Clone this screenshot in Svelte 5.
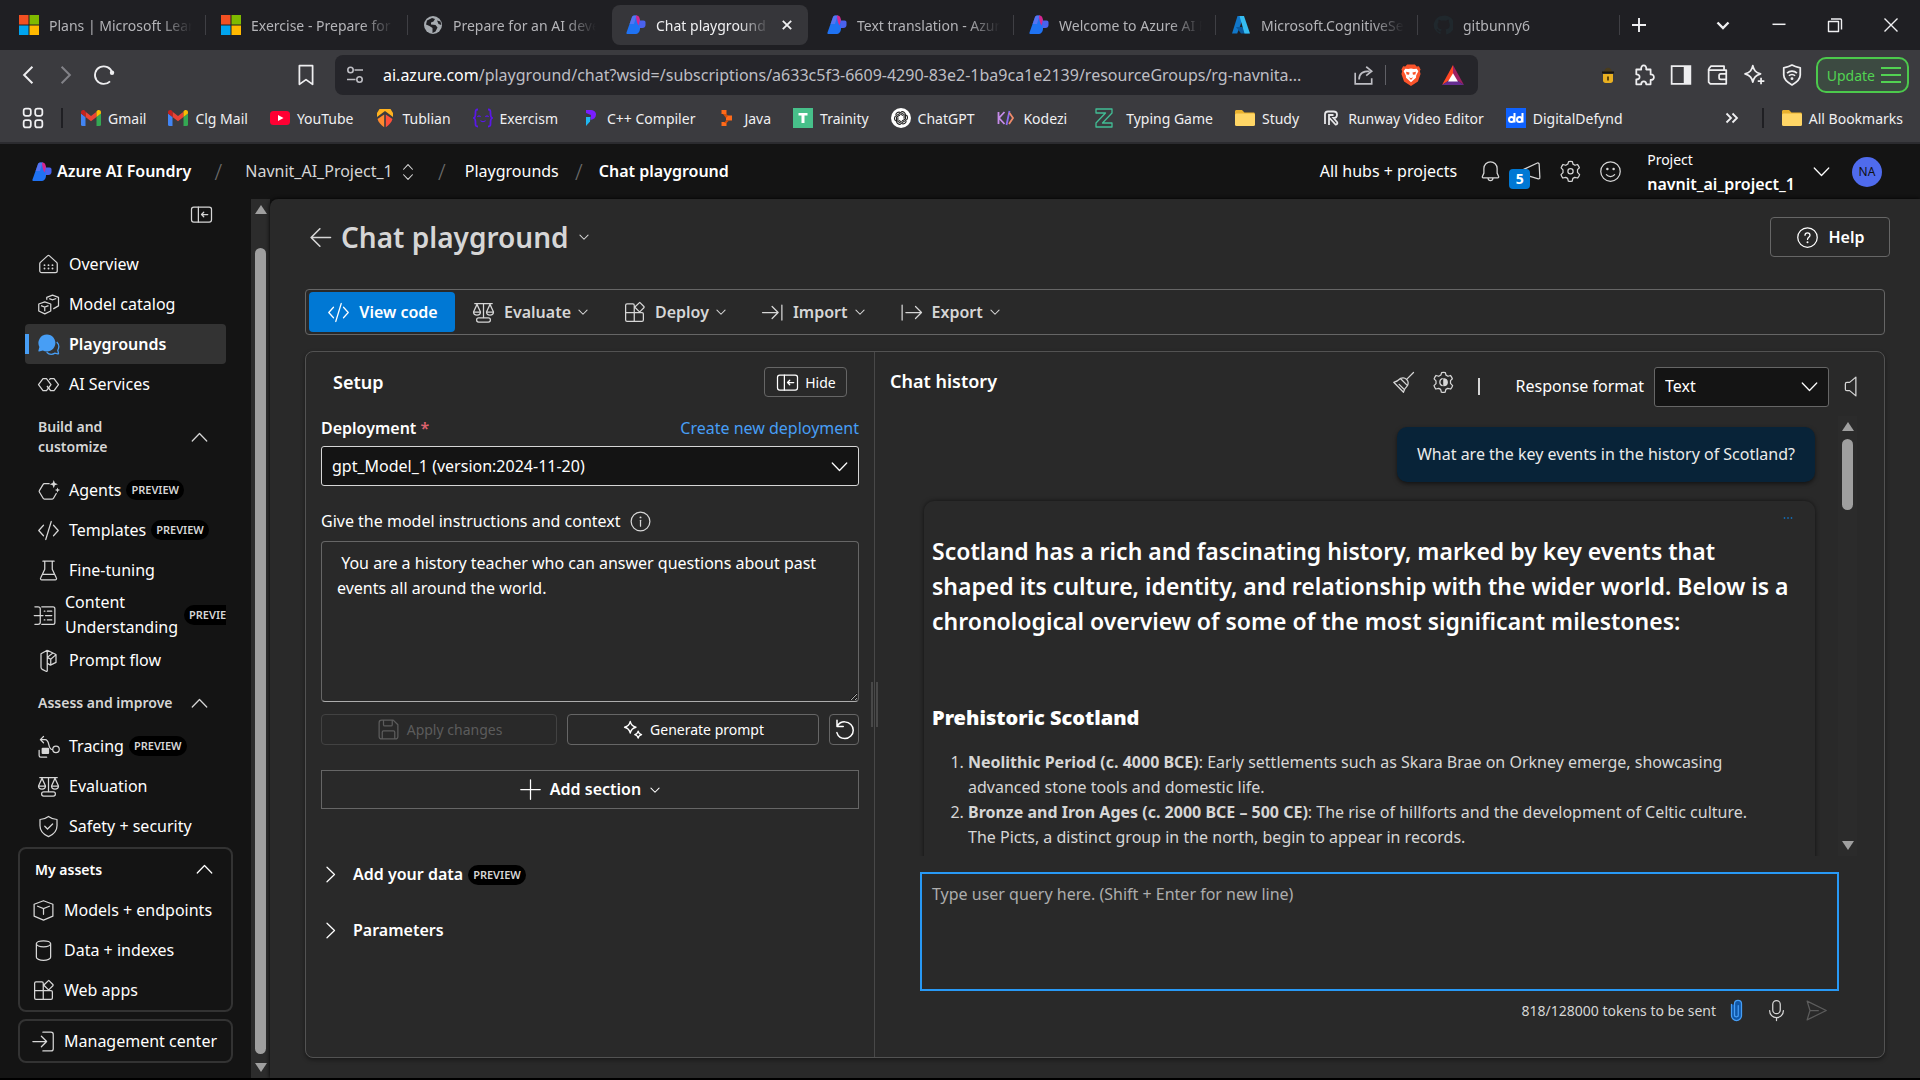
<script>
  const tabs = [
    { icon: 'ms', title: 'Plans | Microsoft Learn' },
    { icon: 'ms', title: 'Exercise - Prepare for an AI' },
    { icon: 'globe', title: 'Prepare for an AI development' },
    { icon: 'foundry', title: 'Chat playground - Azure AI', active: true },
    { icon: 'foundry', title: 'Text translation - Azure AI' },
    { icon: 'foundry', title: 'Welcome to Azure AI Foundry' },
    { icon: 'azure', title: 'Microsoft.CognitiveServices' },
    { icon: 'github', title: 'gitbunny6' }
  ];

  const bookmarks = [
    { icon: 'gmail', label: 'Gmail' },
    { icon: 'gmail', label: 'Clg Mail' },
    { icon: 'youtube', label: 'YouTube' },
    { icon: 'tublian', label: 'Tublian' },
    { icon: 'exercism', label: 'Exercism' },
    { icon: 'programiz', label: 'C++ Compiler' },
    { icon: 'java', label: 'Java' },
    { icon: 'trainity', label: 'Trainity' },
    { icon: 'chatgpt', label: 'ChatGPT' },
    { icon: 'kodezi', label: 'Kodezi' },
    { icon: 'typing', label: 'Typing Game', wide: true },
    { icon: 'folder', label: 'Study' },
    { icon: 'runway', label: 'Runway Video Editor' },
    { icon: 'defynd', label: 'DigitalDefynd' }
  ];

  const mainNav = [
    { icon: 'home', label: 'Overview' },
    { icon: 'cubes', label: 'Model catalog' },
    { icon: 'chat', label: 'Playgrounds', active: true },
    { icon: 'services', label: 'AI Services' }
  ];
  const buildNav = [
    { icon: 'agents', label: 'Agents', preview: true },
    { icon: 'code', label: 'Templates', preview: true },
    { icon: 'beaker', label: 'Fine-tuning' },
    { icon: 'content', label: 'Content Understanding', preview: true, tall: true },
    { icon: 'flow', label: 'Prompt flow' }
  ];
  const assessNav = [
    { icon: 'tracing', label: 'Tracing', preview: true },
    { icon: 'scales', label: 'Evaluation' },
    { icon: 'shield', label: 'Safety + security' }
  ];
  const assets = [
    { icon: 'cube', label: 'Models + endpoints' },
    { icon: 'database', label: 'Data + indexes' },
    { icon: 'apps', label: 'Web apps' }
  ];
  const actions = [
    { icon: 'scales', label: 'Evaluate' },
    { icon: 'apps', label: 'Deploy' },
    { icon: 'import', label: 'Import' },
    { icon: 'export', label: 'Export' }
  ];

  // Line icons on a 20-unit grid, drawn in the current text colour.
  const glyphs = {
    home: '<path d="M3.500 8.300 9.200 3.100a1.200 1.200 0 0 1 1.600 0l5.700 5.200c.3.300.5.700.5 1.100v5.600c0 .9-.7 1.500-1.500 1.500h-11c-.8 0-1.500-.6-1.500-1.500V9.400c0-.4.2-.8.5-1.100Z"/><path stroke-linecap="round" stroke-width="1.500" d="M6.800 10.500h0M10 10.500h0M13.200 10.500h0M6.800 13.200h0M10 13.200h0M13.200 13.200h0"/>',
    cubes: '<path d="M2.200 9.600 7 7.900l4.800 1.700v5.600L7 17.500l-4.800-2.300Z" stroke-linejoin="round"/><path d="m4 10.900 3 1.100 3-1.100M7 12v3.300"/><path d="M8.600 6.200V4.300L13.200 2.500l4.800 1.800v6.800l-4.200 2.400" stroke-linejoin="round"/><path d="m10.600 5.300 2.600.9 3-1"/>',
    chat: '<path fill="currentColor" stroke="none" d="M8.700 2a6.800 6.800 0 1 1-3.200 12.800L2.500 15.600a.5.5 0 0 1-.6-.6l.8-3A6.800 6.800 0 0 1 8.700 2Z"/><path d="M16.600 8a5.500 5.500 0 0 1 .8 6.600l.6 2.400c.1.400-.2.600-.5.500l-2.300-.6a5.500 5.500 0 0 1-6.700-.7"/>',
    services: '<path stroke-linejoin="round" d="M5.600 5.200h2.800l3.600 4.800-3.600 4.800H5.600L2 10Z"/><path stroke-linejoin="round" d="M10.600 6.200 11.600 5.200h2.800L18 10l-3.600 4.800h-2.800L8.800 11.200"/>',
    agents: '<path stroke-linecap="round" d="M10.500 4.500H6.700c-.4 0-.8.2-1 .6L2.700 10.100c-.2.300-.2.800 0 1.100l3 5c.2.400.6.600 1 .6h6.300c.4 0 .8-.2 1-.6l2.200-3.800"/><path fill="currentColor" stroke="none" d="m14.200 1.600.9 2.400 2.400.9-2.400.9-.9 2.400-.9-2.400-2.400-.9 2.400-.9ZM17.200 7.500l.6 1.500 1.500.6-1.500.6-.6 1.500-.6-1.500-1.500-.6 1.500-.6Z"/>',
    code: '<path stroke-linecap="round" stroke-linejoin="round" d="M6 5.800 2.200 10 6 14.200M14 5.800 17.800 10 14 14.200M12.200 2.800 7.800 17.200"/>',
    beaker: '<path stroke-linecap="round" stroke-linejoin="round" d="M5.500 2.500h9M7 2.500v6.500L3.700 16a1 1 0 0 0 .9 1.500h10.800a1 1 0 0 0 .9-1.500L13 9V2.500M5.300 13h9.400"/>',
    content: '<path stroke-linecap="round" d="M7 3h9c.9 0 1.500.6 1.500 1.500v11c0 .9-.6 1.500-1.500 1.500H7M1.500 3H4c1 0 1.800.7 1.800 1.600v10.800c0 .9-.8 1.600-1.800 1.600H1.500M1 10h7M9 6.500h.5M11.500 6.500H15M10 10h5M9 13.500h.5M11.500 13.500H15"/>',
    flow: '<path stroke-linejoin="round" d="M9 1.800v17M9 1.800 4 4.600v10.800c0 .7.400 1.400 1 1.700l3 1.500c.5.300 1-.1 1-.6M9 1.800l7 3.400v6.300l-4.400 2.200L9 12.300M9 7.500 13.500 4M11.800 13.500V9l4-3.500M11.800 9 9 7.500"/>',
    tracing: '<path stroke-linecap="round" stroke-linejoin="round" d="M6 2 3.500 4.500 6 7M3.500 4.500h3.800c4.200 0 1.700 8 5.800 8"/><circle cx="16" cy="12.200" r="2.600"/><rect x="4.500" y="11" width="6" height="5" rx=".8" fill="currentColor" stroke="none"/><path stroke-linecap="round" d="M2.500 13v4.200c0 .7.500 1.300 1.300 1.300h4.700"/>',
    scales: '<path stroke-linecap="round" stroke-linejoin="round" d="M3 2.800h14M10 2.800V14M4.800 3.500 2 9.600h5.600ZM15.200 3.500l-2.800 6.100H18ZM2 9.600c0 3.200 5.600 3.200 5.600 0M12.400 9.600c0 3.200 5.600 3.200 5.600 0"/><rect x="4.500" y="14.200" width="11" height="3.400" rx="1.600"/>',
    shield: '<path stroke-linejoin="round" d="M10 1.900c2 1.500 4.200 2.300 6.800 2.500v5c0 4-2.300 6.800-6.800 8.700-4.500-1.900-6.800-4.700-6.800-8.700v-5C5.800 4.200 8 3.400 10 1.900Z"/><path stroke-linecap="round" d="m7 9.800 2.200 2.200L13.300 8"/>',
    cube: '<path stroke-linejoin="round" d="M10 2.200 17.500 5v9.500L10 17.700 2.500 14.500V5Z"/><path stroke-linecap="round" d="M5.300 6.600 10 8.400l4.700-1.800M10 8.400V13"/>',
    database: '<ellipse cx="10" cy="4.600" rx="5.700" ry="2.400"/><path d="M4.300 4.600v10.800c0 1.300 2.500 2.400 5.700 2.400s5.700-1.100 5.700-2.400V4.600"/>',
    apps: '<path stroke-linejoin="round" d="M9.800 10h6.200c.6 0 1.100.5 1.100 1.100v4.800c0 .6-.5 1.100-1.100 1.100H4c-.6 0-1.100-.5-1.100-1.100V4.100c0-.6.5-1.100 1.100-1.100h4.700c.6 0 1.100.5 1.100 1.100ZM2.900 10h6.900v7M14.200 1.900l3.300 3.300c.3.300.3.700 0 1l-2.900 2.900c-.3.300-.7.300-1 0l-2.900-2.900c-.3-.3-.3-.7 0-1Z"/>',
    import: '<path stroke-linecap="round" stroke-linejoin="round" d="M17.500 4v12M2 10h12.500M9.700 5.200l4.800 4.800-4.800 4.800"/>',
    export: '<path stroke-linecap="round" stroke-linejoin="round" d="M2.500 4v12M5.500 10H18M13.200 5.200 18 10l-4.800 4.800"/>',
    signin: '<path stroke-linecap="round" stroke-linejoin="round" d="M9.500 2.500H16c1 0 1.800.8 1.800 1.800v11.400c0 1-.8 1.800-1.800 1.800H9.500M1.500 10h11M8.300 5.800l4.200 4.200-4.200 4.200"/>',
    panel: '<rect x="2" y="4" width="16" height="12" rx="1.800"/><path stroke-linecap="round" stroke-linejoin="round" d="M7.500 4v12M15 10h-5M11.800 8.200 10 10l1.800 1.800"/>',
    up: '<path stroke-linecap="round" stroke-linejoin="round" d="m4.200 12.800 5.800-6 5.800 6"/>',
    down: '<path stroke-linecap="round" stroke-linejoin="round" d="m4.200 7.200 5.800 6 5.800-6"/>',
    right: '<path stroke-linecap="round" stroke-linejoin="round" d="m7.200 4.200 6 5.800-6 5.800"/>',
    back: '<path stroke-width="1.300" stroke-linecap="round" stroke-linejoin="round" d="M18 10H2.500M9.500 3 2.500 10l7 7"/>',
    updown: '<path stroke-linecap="round" stroke-linejoin="round" d="M6 7.500 10 3.200l4 4.300M6 12.500l4 4.300 4-4.300"/>',
    help: '<circle cx="10" cy="10" r="7.800"/><path stroke-linecap="round" d="M8 8.200c0-1.200.9-2 2-2s2 .8 2 1.900c0 1.600-2 1.700-2 3.400"/><circle cx="10" cy="13.700" r=".8" fill="currentColor" stroke="none"/>',
    info: '<circle cx="10" cy="10" r="7.500"/><path stroke-linecap="round" d="M10 9v4.700"/><circle cx="10" cy="6.700" r=".8" fill="currentColor" stroke="none"/>',
    save: '<path stroke-linejoin="round" d="M4.500 2.500h9.300l3.700 3.700v9.300c0 1.100-.9 2-2 2h-11c-1.100 0-2-.9-2-2v-11c0-1.100.9-2 2-2ZM6 2.500v3.600c0 .6.400 1 1 1h5c.6 0 1-.4 1-1V2.500M5 17.500v-5.400c0-.6.400-1 1-1h8c.6 0 1 .4 1 1v5.400"/>',
    sparkles: '<path stroke-width="1.200" stroke-linejoin="round" d="M7.500 2.200c.7 3.300 1.900 4.500 5.200 5.300-3.300.8-4.500 2-5.200 5.300-.7-3.300-1.900-4.500-5.200-5.300 3.300-.8 4.500-2 5.200-5.300ZM14.700 11c.4 2 1.200 2.700 3.100 3.200-1.900.5-2.700 1.200-3.100 3.200-.4-2-1.200-2.700-3.100-3.200 1.900-.5 2.700-1.200 3.100-3.200Z"/>',
    undo: '<path stroke-width="1.200" stroke-linecap="round" stroke-linejoin="round" d="M4 2.500v5h5M4.200 7.200C5.800 4.700 8 3.800 10.300 3.900c3.900.2 6.700 3.200 6.700 6.600 0 3.600-3 6.700-6.700 6.700-3.200 0-5.600-2-6.400-4.700"/>',
    plus: '<path stroke-linecap="round" d="M10 2.200v15.600M2.200 10h15.600"/>',
    broom: '<path stroke-linecap="round" stroke-linejoin="round" d="m18 2-5.700 5.700M7.500 6.800l5.700 5.700c.9-1.900.6-3.600-.7-5-1.400-1.300-3.100-1.600-5-.7Zm0 0c-1.500 1.500-3 2.500-5.300 3l7.800 8c.5-2.500 1.700-3.900 3.200-5.300M6.500 11.500l3.500 3.500"/>',
    gear: '<path stroke-linejoin="round" d="M8.500 2.100a8 8 0 0 1 3 0l.5 2 1.600.9 2-.6a8 8 0 0 1 1.500 2.600L15.600 8.500v2.200l1.700 1.800a8 8 0 0 1-1.600 2.700l-2.300-.5-1.500.8-.6 2.300a8 8 0 0 1-3 0l-.6-2.300-1.500-.8-2.300.5a8 8 0 0 1-1.500-2.700l1.600-1.600V8.700L2.500 7.100A8 8 0 0 1 4 4.400l2.200.6L7.900 4Z"/>',
    gearDot: '<circle cx="10" cy="9.700" r="2.100"/>',
    gearPlay: '<path stroke-linecap="round" d="M9 6.900a3 3 0 0 0 0 5.600"/><path fill="currentColor" d="M10.300 7v5.400a2.700 2.700 0 0 0 0-5.400Z"/>',
    speaker: '<path stroke-linejoin="round" d="M13.500 2.500v15l-5-4.200H6.300c-.7 0-1.200-.5-1.200-1.200V7.900c0-.7.5-1.200 1.200-1.200h2.200Z"/>',
    clip: '<path fill="#0f57a8" stroke-linecap="round" d="M6 5v9a4 4 0 0 0 8 0V4.600a2.800 2.800 0 0 0-5.600 0V13.500a1.500 1.500 0 0 0 3 0V6"/>',
    mic: '<rect x="7" y="2" width="6" height="10.500" rx="3"/><path stroke-linecap="round" d="M4.500 10v.2a5.500 5.500 0 0 0 11 0V10M10 15.700V18"/>',
    send: '<path stroke-linejoin="round" d="m2.500 2.500 15.300 7.500-15.300 7.500L4.800 10ZM4.800 10h7"/>',
    bell: '<path stroke-linejoin="round" d="M10 2.200a5.300 5.300 0 0 0-5.300 5.300v3.800L3.500 14c-.2.500.1 1 .6 1h11.800c.5 0 .8-.5.6-1l-1.200-2.700V7.500A5.300 5.300 0 0 0 10 2.200ZM8 15.200a2 2 0 0 0 4 0"/>',
    megaphone: '<path stroke-linejoin="round" d="M15.500 3.200c.5-.2 1.200.1 1.400.7l.6 11c.1.700-.5 1.100-1.200 1L5 12.500 3 9Z"/>',
    smile: '<circle cx="10" cy="10" r="7.800"/><path stroke-linecap="round" d="M6.700 12.500c1.700 2 4.900 2 6.600 0"/><circle cx="7.500" cy="8" r="1" fill="currentColor" stroke="none"/><circle cx="12.500" cy="8" r="1" fill="currentColor" stroke="none"/>',
    dots: '<g fill="currentColor" stroke="none"><rect x="4" y="9" width="2" height="2"/><rect x="9" y="9" width="2" height="2"/><rect x="14" y="9" width="2" height="2"/></g>',
    navBack: '<path stroke-width="1.800" d="M14 2.500 6.500 10l7.500 7.500"/>',
    navForward: '<path stroke-width="1.800" d="m6 2.500 7.500 7.500L6 17.500"/>',
    reload: '<path stroke-width="1.600" d="M15.500 15.700a8 8 0 1 1 2-7.700"/><circle cx="17.300" cy="8" r="2" fill="currentColor" stroke="none"/>',
    bookmark: '<path stroke-width="1.600" stroke-linejoin="round" d="M4 1.500h12v17l-6-4.300-6 4.300Z"/>',
    tune: '<path stroke-width="1.600" d="M9.500 5H18M2 14.500h8.500"/><circle cx="5.500" cy="5" r="2.700" stroke-width="1.600"/><circle cx="14.500" cy="14.500" r="2.700" stroke-width="1.600"/>',
    share: '<path stroke-width="1.500" d="M2 8v10h15v-5M5.500 14c0-5 3.500-7.500 9.500-7.500M12 2.500l5 4-5 4"/>',
    puzzle: '<path stroke-width="1.600" stroke-linejoin="round" d="M3 5h4.500c-1-5 5.500-5 4.500 0H16v4.500c4-.5 4 5.500 0 5V18.500h-4c0-3.500-4.500-3.500-4.500 0H3V14c4 .5 4-5 0-4.500Z"/>',
    side: '<path stroke-width="1.600" d="M1.500 2h17v16h-17Z"/><path fill="currentColor" stroke="none" d="M12.500 2h6v16h-6Z"/>',
    wallet: '<path stroke-width="1.600" stroke-linejoin="round" d="M1.500 4.500 3.500 2h12v3.500M1.500 4.500v12L3 18h14.500V5.500h-16M17.500 9h-5a1.500 1.500 0 0 0-1.500 1.500v2a1.500 1.500 0 0 0 1.500 1.500h5"/>',
    leo: '<path stroke-width="1.600" stroke-linejoin="round" d="M8 1.500c1 4.500 2.500 6 7 7.500-4.500 1.500-6 3-7 7.500C7 12 5.500 10.500 1 9c4.500-1.500 6-3 7-7.500ZM15.500 12.500v6M12.500 15.500h6"/>',
    vpn: '<path stroke-width="1.600" stroke-linejoin="round" d="M10 1c2.500 1.500 5 2 7.500 2.500V10c0 4-3 6.500-7.500 9-4.500-2.500-7.500-5-7.500-9V3.500C5 3 7.500 2.500 10 1Z"/><path stroke-width="1.500" d="M5.500 8.300c2.500-2.500 6.500-2.500 9 0M7.200 10.700c1.600-1.600 4-1.600 5.600 0"/><circle cx="10" cy="13.300" r="1.300" fill="currentColor" stroke="none"/>',
    grid4: '<g stroke-width="1.600"><rect x="1.500" y="1.500" width="6.500" height="6.500" rx="2"/><rect x="12" y="1.500" width="6.500" height="6.500" rx="2"/><rect x="1.500" y="12" width="6.500" height="6.500" rx="2"/><rect x="12" y="12" width="6.500" height="6.500" rx="2"/></g>',
    more: '<path stroke-width="1.800" d="m4.500 5.500 4.500 4.500-4.500 4.500M10.500 5.500 15 10l-4.500 4.500"/>',
    close: '<path stroke-width="2.600" d="m4 4 12 12M16 4 4 16"/>',
    winClose: '<path stroke-width="1.400" d="m3.500 3.500 13 13M16.500 3.500l-13 13"/>',
    restore: '<path stroke-width="1.400" stroke-linejoin="round" d="M3.500 6.500h10v10h-10ZM6 4h9.500c.7 0 1 .3 1 1v9.500"/>',
    minimize: '<path stroke-width="1.500" d="M3.500 9.300h13"/>',
    caret: '<path stroke-width="2.400" d="M4.500 7.500 10 13l5.500-5.500"/>',
    newTab: '<path stroke-width="1.900" d="M10 3v14M3 10h14"/>'
  };

  const petal = 'M10 4c2-1 4.500.5 4.500 3v4L11 13';
  const petals = [0, 60, 120, 180, 240, 300]
    .map((turn) => `<path d="${petal}" transform="rotate(${turn} 10 10)"/>`)
    .join('');

  // Multi-colour marks, on the same 20-unit grid.
  const logos = {
    ms: '<path fill="#f25022" d="M0 0h9.500v9.500H0Z"/><path fill="#7fba00" d="M10.500 0H20v9.500h-9.500Z"/><path fill="#00a4ef" d="M0 10.500h9.500V20H0Z"/><path fill="#ffb900" d="M10.500 10.500H20V20h-9.500Z"/>',
    globe: '<circle cx="10" cy="10" r="9" fill="#a6abb0"/><path fill="#1f1f23" d="M4 5.500 9 3l3 1-1.500 2.500L8 7.500v2l4.500.5 2 2.500-2 4L9.500 18V13l-3-2L3 9.500ZM14 5.500l3.500 1 .8 3.500-2.800-1Z"/>',
    foundry: '<path fill="#1f72f2" d="M6 2C6.500 1 7.300.5 8.500.5H11L14 5v8.500c0 3.500-2 5.500-5 5.500H1.500c-1 0-1.300-.6-1-1.500Z"/><path fill="#6b74f2" d="M6 2C6.500 1 7.300.5 8.500.5H10.500L8 9 3.600 9Z" opacity=".7"/><path fill="#d6268f" d="M10 .5c2.500 0 3.700 1.200 3.900 4.500l.1 1.500-1.500 4C11 8 10 4 10 .5Z"/><path fill="#4a62ee" d="M13.500 5.500h4c1.300 0 2 .7 2 2v2.500c0 2-1.300 3-3.200 3h-2.800Z"/>',
    azure: '<path fill="#1177c9" d="M6.500 1H13L6.200 18.500H1Z"/><path fill="#0a5aa0" d="M11 12H5l5 6.500h8Z"/><path fill="#35bdf2" d="M8.500 1H13l6 17.500h-5.500Z"/>',
    github: '<path fill="#20282d" d="M10 .8a9.300 9.300 0 0 0-3 18.100c.5.100.6-.2.600-.5v-1.800c-2.600.6-3.200-1.100-3.200-1.100-.4-1.100-1-1.400-1-1.400 1.400-.4 2 .9 2 .9.9 1.500 2.300 1.100 2.900.8 0-.6.300-1.100.6-1.300-2.100-.3-4.300-1-4.300-4.700 0-1 .4-1.900 1-2.500-.1-.3-.4-1.300.1-2.600 0 0 .8-.3 2.600 1 1.500-.4 3.200-.4 4.700 0 1.800-1.300 2.600-1 2.600-1 .5 1.300.2 2.300.1 2.600.6.600 1 1.500 1 2.500 0 3.700-2.200 4.400-4.300 4.700.4.300.7.900.7 1.800v2.600c0 .300.100.6.6.5A9.300 9.300 0 0 0 10 .8Z"/>',
    gmail: '<path fill="#4285f4" d="M0 5.500 4.500 9v9H1.500A1.500 1.500 0 0 1 0 16.500Z"/><path fill="#34a853" d="M15.500 9 20 5.500v11a1.500 1.500 0 0 1-1.500 1.500h-3Z"/><path fill="#ea4335" d="M4.500 3.800 10 8l5.500-4.200V9L10 13.200 4.500 9Z"/><path fill="#c5221f" d="M0 5.500V4.300C0 2.200 2.300 1.500 3.600 2.500l.9.700V9Z"/><path fill="#fbbc04" d="M15.500 3.200l.9-.7C17.700 1.500 20 2.200 20 4.300v1.200L15.500 9Z"/>',
    youtube: '<rect y="3" width="20" height="14" rx="3.500" fill="#ff0033"/><path fill="#fff" d="m8 7 5.500 3L8 13Z"/>',
    tublian: '<path fill="#ffb21f" d="M4.500 1h11l2.500 4v4l-8-6-8 6V5Z"/><path fill="#ff8a2f" d="M9.200 6.500v12.800C6 17 3.500 14.500 2.500 11Z"/><path fill="#ff4f3a" d="M10.800 6.500v12.800C14 17 16.500 14.500 17.500 11Z"/>',
    exercism: '<g fill="none" stroke="#5a18e8" stroke-width="1.800"><path d="M5 1.500c-2.500 0-2.500 1-2.500 3.500S2.500 9.500.8 10c1.700.5 1.700 2.500 1.700 5s0 3.500 2.500 3.500M15 1.500c2.500 0 2.500 1 2.500 3.500s0 4.500 1.700 5c-1.700.5-1.700 2.500-1.700 5s0 3.500-2.500 3.500"/><path stroke-width="1.300" d="M4.500 9c.7-1.500 2.300-1.500 3 0M12.500 9c.7-1.500 2.300-1.500 3 0M7.500 12.500c1 1.500 4 1.500 5 0"/></g>',
    programiz: '<path fill="#7a1dff" d="M6 2h4c4 0 6 2 6 4.500 0 3-2 5-5.500 5.500L11 7 6 5Z"/><path fill="#1fb8f2" d="M6 9h4.500L10 13.500 6 18Z"/>',
    java: '<path fill="#ff6a1a" d="M4.500 2h5v4h-5ZM9 7.500h6v5H9ZM4.500 14h5v4h-5Z"/><path fill="#d94f0a" d="M6 6h3.500L11 8 9 10ZM9 12.500h3L9.500 15H7Z"/>',
    trainity: '<path fill="#47c08a" d="M0 0h20v20H0Z"/><path fill="#fff" d="M5.500 5h9v2.600h-3V15h-3V7.600h-3Z"/>',
    chatgpt: `<circle cx="10" cy="10" r="10" fill="#fff"/><g fill="none" stroke="#222" stroke-width="1.100">${petals}</g>`,
    kodezi: '<g fill="none" stroke-width="1.800"><path stroke="#c58be8" d="M2.500 4v12M8.500 4 3 10l5.500 6"/><path stroke="#8d6cf0" d="m13.500 3-3 14"/><path stroke="#ef8a6a" d="m13.500 5 3.500 5-4 6"/></g>',
    typing: '<path fill="none" stroke="#42bd95" stroke-width="1.300" stroke-linejoin="round" d="M2 1h16v4L8.500 15H18v4H2v-4L11.500 5H2Z"/>',
    folder: '<path fill="#e9b12e" d="M0 3.500C0 2.700.6 2 1.500 2H7l2.500 2.500h9c.9 0 1.500.7 1.500 1.500v10H0Z"/><rect y="5.500" width="20" height="12.500" rx="1.500" fill="#ffd666"/>',
    runway: '<g fill="none" stroke="#e8e8ea" stroke-width="1.800"><path d="M4 16V6.500C4 4.500 5 3.500 7 3.500h5.500c2 0 3.500 1.200 3.500 3.200S14.500 10 12.500 10l3.500 4c1 1.300 0 2.800-1.500 2.500L8.500 10M8 17V7h4.500"/></g>',
    defynd: '<path fill="#0f62ff" d="M0 0h20v20H0Z"/><g fill="none" stroke="#fff" stroke-width="2"><circle cx="5.500" cy="11.500" r="2.500"/><path d="M8.500 5v9.500"/><circle cx="13.500" cy="11.500" r="2.500"/><path d="M16.500 5v9.500"/></g>',
    brave: '<path fill="#fb542b" d="M6.500.5h7l1.700 1.700 2-.2 1.500 3-.7 1.500.7 2.500-2.400 7L10 20l-6.300-4L1.300 9 2 6.500 1.300 5l1.500-3 2 .2Z"/><path fill="#fff" d="m10 4 2.500.6 2.700-.3 1.500 2.200-2 4-.2 2-4.500 4-4.500-4-.2-2-2-4 1.500-2.200 2.700.3Z"/><path fill="#fb542b" d="m5.500 7 3.200.8-.5 2L6 9.500ZM14.500 7l-3.200.8.5 2 2.200-.3ZM8 12l2 1 2-1-2 2.500Z"/>',
    bat: '<path fill="#ff4724" d="M10 1 0 19l10-6.500Z"/><path fill="#9e1f63" d="m10 1 10 18-10-6.500Z"/><path fill="#662d91" d="M0 19h20l-10-6.500Z"/><path fill="#fff" d="m10 8.500 4.500 7.500h-9Z"/>',
    lock: '<path fill="#4a3c1c" d="M6 7.500C6 1 14 1 14 7.500Z"/><path fill="#17140c" d="M4 6.500h12v2H4Z"/><path fill="#e9b021" d="M5 9h10v6.500c0 1.500-1 2.500-2.500 2.500h-5C6 18 5 17 5 15.500Z"/><path fill="#3a2c05" d="M9.200 11.500h1.600v4H9.200Z"/>'
  };
</script>

{#snippet icon(name, size = 's25')}
  <svg class="icon {size}" viewBox="0 0 20 20" aria-hidden="true">{@html glyphs[name]}</svg>
{/snippet}

{#snippet logo(name, size = 's20')}
  <svg class="logo {size}" viewBox="0 0 20 20" aria-hidden="true">{@html logos[name]}</svg>
{/snippet}

{#snippet navItem(item)}
  <a class="nav-item" class:active={item.active} class:tall={item.tall} href="#nav">
    {@render icon(item.icon)}
    <span class="nav-label">{item.label}</span>
    {#if item.preview}<span class="badge">PREVIEW</span>{/if}
  </a>
{/snippet}

<div class="page">
  <div class="tab-strip">
    {#each tabs as tab}
      <div class="tab" class:active={tab.active}>
        {@render logo(tab.icon)}
        <span class="tab-title">{tab.title}</span>
        {#if tab.active}
          <button class="plain" aria-label="Close tab">{@render icon('close', 's14')}</button>
        {/if}
      </div>
    {/each}
    <button class="plain new-tab" aria-label="New tab">{@render icon('newTab', 's20')}</button>
    <div class="window-controls">
      <button class="plain" aria-label="Search tabs">{@render icon('caret', 's20')}</button>
      <button class="plain" aria-label="Minimize">{@render icon('minimize', 's20')}</button>
      <button class="plain" aria-label="Restore">{@render icon('restore', 's20')}</button>
      <button class="plain" aria-label="Close">{@render icon('winClose', 's20')}</button>
    </div>
  </div>

  <div class="toolbar">
    <div class="nav-buttons">
      <button class="plain" aria-label="Back">{@render icon('navBack', 's22')}</button>
      <button class="plain dim" aria-label="Forward">{@render icon('navForward', 's22')}</button>
      <button class="plain" aria-label="Reload">{@render icon('reload', 's22')}</button>
    </div>
    <button class="plain" aria-label="Bookmark this page">{@render icon('bookmark', 's22')}</button>
    <div class="address">
      {@render icon('tune', 's20')}
      <span class="url"><b>ai.azure.com</b>/playground/chat?wsid=/subscriptions/a633c5f3-6609-4290-83e2-1ba9ca1e2139/resourceGroups/rg-navnita...</span>
      <button class="plain share" aria-label="Share">{@render icon('share', 's22')}</button>
      <span class="address-rule"></span>
      {@render logo('brave', 's22')}
      <span class="bat">{@render logo('bat', 's22')}</span>
    </div>
    <div class="extensions">
      {@render logo('lock')}
      {@render icon('puzzle', 's22')}
      {@render icon('side', 's22')}
      {@render icon('wallet', 's22')}
      {@render icon('leo', 's22')}
      {@render icon('vpn', 's22')}
      <button class="update">Update <span class="burger"></span></button>
    </div>
  </div>

  <div class="bookmarks">
    {@render icon('grid4', 's22')}
    <span class="rule first"></span>
    {#each bookmarks as mark}
      <a class="bookmark" class:wide={mark.wide} href="#bookmark">{@render logo(mark.icon, 's20')}{mark.label}</a>
    {/each}
    <span class="spacer"></span>
    {@render icon('more', 's20')}
    <span class="rule last"></span>
    <a class="bookmark" href="#all">{@render logo('folder', 's20')}All Bookmarks</a>
  </div>

  <header class="app-header">
    <a class="brand" href="#home">{@render logo('foundry', 's20')}Azure AI Foundry</a>
    <span class="slash">/</span>
    <button class="plain project-switch">Navnit_AI_Project_1 {@render icon('updown', 's22')}</button>
    <span class="slash">/</span>
    <a class="crumb" href="#playgrounds">Playgrounds</a>
    <span class="slash">/</span>
    <span class="crumb current">Chat playground</span>
    <span class="spacer"></span>
    <a class="hubs" href="#hubs">All hubs + projects</a>
    <button class="plain" aria-label="Notifications">{@render icon('bell')}</button>
    <button class="plain news" aria-label="What's new">{@render icon('megaphone')}<span class="count">5</span></button>
    <button class="plain" aria-label="Settings">
      <svg class="icon s25" viewBox="0 0 20 20" aria-hidden="true">{@html glyphs.gear + glyphs.gearDot}</svg>
    </button>
    <button class="plain" aria-label="Feedback">{@render icon('smile')}</button>
    <button class="plain project">
      <span class="project-text"><small>Project</small><strong>navnit_ai_project_1</strong></span>
      {@render icon('down')}
    </button>
    <span class="avatar">NA</span>
  </header>

  <div class="body">
    <nav class="sidebar">
      <button class="plain collapse" aria-label="Collapse navigation">{@render icon('panel')}</button>
      {#each mainNav as item}{@render navItem(item)}{/each}
      <button class="plain group two">Build and customize {@render icon('up')}</button>
      {#each buildNav as item}{@render navItem(item)}{/each}
      <button class="plain group">Assess and improve {@render icon('up')}</button>
      {#each assessNav as item}{@render navItem(item)}{/each}
      <div class="box">
        <button class="plain group">My assets {@render icon('up')}</button>
        {#each assets as item}{@render navItem(item)}{/each}
      </div>
      <div class="box management">{@render navItem({ icon: 'signin', label: 'Management center' })}</div>
    </nav>
    <div class="scrollbar" aria-hidden="true">
      <span class="arrow-up"></span><span class="thumb"></span><span class="arrow-down"></span>
    </div>

    <main>
      <div class="title-row">
        <button class="plain" aria-label="Back">{@render icon('back')}</button>
        <h1>Chat playground</h1>
        {@render icon('down', 's14')}
        <span class="spacer"></span>
        <button class="help">{@render icon('help')} Help</button>
      </div>

      <div class="actions">
        <button class="action primary">{@render icon('code')} View code</button>
        {#each actions as action}
          <button class="action">{@render icon(action.icon)} {action.label} {@render icon('down', 's14')}</button>
        {/each}
      </div>

      <div class="card">
        <section class="setup">
          <div class="setup-head">
            <h2>Setup</h2>
            <button class="hide">{@render icon('panel')} Hide</button>
          </div>
          <div class="field-head">
            <label for="deployment">Deployment <span class="required">*</span></label>
            <a href="#new">Create new deployment</a>
          </div>
          <div class="select bright">
            <select id="deployment"><option>gpt_Model_1 (version:2024-11-20)</option></select>
            {@render icon('down')}
          </div>
          <div class="instructions-head">
            <label for="instructions">Give the model instructions and context</label>
            {@render icon('info')}
          </div>
          <textarea id="instructions" class="instructions" value={' You are a history teacher who can answer questions about past events all around the world.'}></textarea>
          <div class="prompt-buttons">
            <button class="apply" disabled>{@render icon('save')} Apply changes</button>
            <button class="generate">{@render icon('sparkles', 's22')} Generate prompt</button>
            <button class="undo" aria-label="Reset">{@render icon('undo')}</button>
          </div>
          <button class="add-section">{@render icon('plus')} Add section {@render icon('down', 's14')}</button>
          <button class="plain fold first">{@render icon('right')} Add your data <span class="badge">PREVIEW</span></button>
          <button class="plain fold">{@render icon('right')} Parameters</button>
        </section>

        <div class="divider"><span class="grip"></span></div>

        <section class="chat">
          <div class="chat-head">
            <h2>Chat history</h2>
            <span class="spacer"></span>
            <button class="plain" aria-label="Clear chat">{@render icon('broom')}</button>
            <button class="plain" aria-label="Chat settings">
              <svg class="icon s25" viewBox="0 0 20 20" aria-hidden="true">{@html glyphs.gear + glyphs.gearPlay}</svg>
            </button>
            <span class="pipe"></span>
            <label for="format">Response format</label>
            <div class="select format">
              <select id="format"><option>Text</option></select>
              {@render icon('down')}
            </div>
            <button class="plain" aria-label="Read aloud">{@render icon('speaker')}</button>
          </div>

          <div class="history">
            <div class="messages">
              <p class="question">What are the key events in the history of Scotland?</p>
              <article class="answer">
                <button class="plain dots" aria-label="More">{@render icon('dots', 's14')}</button>
                <h3>Scotland has a rich and fascinating history, marked by key events that shaped its culture, identity, and relationship with the wider world. Below is a chronological overview of some of the most significant milestones:</h3>
                <h4>Prehistoric Scotland</h4>
                <ol>
                  <li><strong>Neolithic Period (c. 4000 BCE)</strong>: Early settlements such as Skara Brae on Orkney emerge, showcasing advanced stone tools and domestic life.</li>
                  <li><strong>Bronze and Iron Ages (c. 2000 BCE – 500 CE)</strong>: The rise of hillforts and the development of Celtic culture. The Picts, a distinct group in the north, begin to appear in records.</li>
                </ol>
              </article>
            </div>
            <div class="scrollbar inner" aria-hidden="true">
              <span class="arrow-up"></span><span class="thumb"></span><span class="spacer"></span><span class="arrow-down"></span>
            </div>
          </div>

          <textarea class="query" aria-label="User query" placeholder="Type user query here. (Shift + Enter for new line)"></textarea>
          <div class="query-foot">
            <span class="tokens">818/128000 tokens to be sent</span>
            <button class="plain attach" aria-label="Attach">{@render icon('clip')}</button>
            <button class="plain" aria-label="Dictate">{@render icon('mic')}</button>
            <button class="plain muted" aria-label="Send" disabled>{@render icon('send')}</button>
          </div>
        </section>
      </div>
    </main>
  </div>
</div>

<style>
  :global(body) { background: #000; }
  * { box-sizing: border-box; }
  .page {
    display: flex;
    flex-direction: column;
    height: 100vh;
    padding-bottom: 2px;
    overflow: hidden;
    font-family: "Noto Sans", "Open Sans", sans-serif;
    font-size: 16px;
    line-height: 25px;
    color: #fff;
    white-space: nowrap;
  }
  button, select, textarea { font: inherit; color: inherit; margin: 0; }
  button { display: flex; align-items: center; justify-content: center; background: none; padding: 0; }
  a { color: inherit; text-decoration: none; }
  h1, h2, h3, h4, p, ol { margin: 0; }
  .plain { border: 0; flex: none; }
  .spacer { flex: 1; }
  .icon { fill: none; stroke: currentColor; stroke-width: 1; flex: none; display: block; }
  .logo { flex: none; display: block; }
  .s14 { width: 14px; height: 14px; }
  .s14.icon { stroke-width: 1.500; }
  .s20 { width: 20px; height: 20px; }
  .s22 { width: 22px; height: 22px; }
  .s25 { width: 25px; height: 25px; }

  /* Browser frame */
  .tab-strip { flex: none; display: flex; align-items: center; height: 50px; padding-left: 4px; background: #1f1f23; font-size: 14px; color: #b4b4b8; }
  .tab { position: relative; flex: 0 1 202px; min-width: 0; height: 40px; display: flex; align-items: center; gap: 10px; padding: 0 14px 0 15px; }
  .tab::after { content: ""; position: absolute; right: 0; top: 10px; height: 20px; border-right: 1px solid #3f3f44; }
  .tab.active::after, .tab:has(+ .active)::after { display: none; }
  .tab.active { color: #f0f0f2; margin: 0 4px 0 2px; flex-basis: 196px; padding: 0 14px; border-radius: 8px; background: #36363a; }
  .tab-title { flex: 1; min-width: 0; overflow: hidden; mask-image: linear-gradient(to left, transparent, #000 32px); }
  .new-tab { margin-left: 9px; color: #f0f0f2; }
  .window-controls { margin-left: auto; display: flex; gap: 36px; padding-right: 19px; color: #f0f0f2; }

  .toolbar { flex: none; display: flex; align-items: center; height: 50px; padding: 0 11px 0 17px; background: #3b3b3f; color: #eeeef0; }
  .nav-buttons { display: flex; gap: 16px; width: 278px; }
  .dim { color: #828288; }
  .address { flex: 1; min-width: 0; margin-left: 18px; display: flex; align-items: center; height: 40px; padding: 0 14px 0 10px; border-radius: 8px; background: #25252a; color: #bebec4; }
  .url { flex: 1; min-width: 0; overflow: hidden; margin-left: 18px; }
  .url b { font-weight: 400; color: #fff; }
  .address-rule { height: 20px; margin: 0 14px 0 10px; border-left: 1px solid #606066; }
  .bat { margin-left: 20px; }
  .extensions { display: flex; align-items: center; gap: 15px; margin-left: 120px; }
  .update { gap: 6px; height: 36px; margin-left: -2px; padding: 0 6px 0 9px; border: 2px solid #4cc94c; border-radius: 10px; background: #3c4a41; color: #52d352; font-size: 14px; }
  .burger { width: 20px; height: 16px; border-top: 2px solid; border-bottom: 2px solid; background: linear-gradient(#52d352, #52d352) center / 100% 2px no-repeat; }

  .bookmarks { flex: none; display: flex; align-items: center; height: 44px; padding: 0 17px 6px 22px; border-bottom: 2px solid #2b2b2f; background: #3b3b3f; font-size: 14px; color: #f0f0f2; }
  .bookmark { display: flex; align-items: center; gap: 7px; margin-right: 22px; }
  .bookmark.wide { gap: 12px; margin-left: 5px; }
  .rule { height: 20px; border-left: 2px solid #1f1f23; }
  .rule.first { margin: 0 18px 0 17px; }
  .rule.last { margin: 0 18px 0 20px; }
  .rule.last + .bookmark { margin-right: 0; }

  /* Application header */
  .app-header { flex: none; display: flex; align-items: center; height: 55px; padding: 0 38px 0 32px; background: #141414; }
  .brand { display: flex; align-items: center; gap: 5px; font-weight: 600; }
  .slash { width: 54px; text-align: center; font-size: 22px; font-weight: 300; color: #6c6c6c; }
  .project-switch { gap: 4px; color: #d6d6d6; }
  .project-switch + .slash { width: 46px; }
  .crumb + .slash { width: 40px; }
  .current { font-weight: 600; }
  .app-header > button { color: #d6d6d6; margin-left: 15px; }
  .app-header > .project-switch { margin-left: 0; }
  .app-header > .hubs { margin-right: 6px; }
  .news { position: relative; }
  .count { position: absolute; left: -9px; top: 10px; width: 21px; height: 20px; border-radius: 4px; background: #0078d4; color: #fff; font-size: 14px; font-weight: 700; line-height: 20px; }
  .app-header > .project { gap: 14px; margin-left: 24px; color: #fff; }
  .project-text { display: flex; flex-direction: column; align-items: flex-start; }
  .project-text small { font-size: 14px; }
  .project-text strong { font-weight: 600; }
  .avatar { width: 30px; height: 30px; margin-left: 18px; border-radius: 50%; background: #4f6bed; color: #101010; font-size: 12px; line-height: 30px; text-align: center; }

  /* Left navigation */
  .body { flex: 1; min-height: 0; display: flex; background: #141414; }
  .sidebar { flex: none; width: 251px; padding: 3px 18px 0; overflow: hidden; color: #d6d6d6; }
  .collapse { margin: 0 19px 17px auto; }
  .nav-item { display: flex; align-items: center; height: 40px; margin: 0 7px; padding-left: 11px; overflow: hidden; border-radius: 4px; }
  .nav-label { margin-left: 8px; color: #fff; }
  .nav-item.active { background: linear-gradient(#479ef5, #479ef5) left center / 4px 20px no-repeat #333; color: #479ef5; }
  .active .nav-label { font-weight: 600; }
  .nav-item.tall { height: 50px; padding-left: 8px; }
  .tall .nav-label { margin-left: 7px; width: 114px; flex: none; white-space: normal; }
  .badge { flex: none; height: 20px; margin-left: 5px; padding: 0 5px; border-radius: 10px; background: #000; color: #d6d6d6; font-size: 11px; font-weight: 600; line-height: 20px; }
  .group { width: 100%; height: 46px; justify-content: space-between; padding: 0 21px 0 20px; font-size: 14px; font-weight: 600; line-height: 20px; color: #d6d6d6; text-align: left; }
  .group.two { height: 66px; white-space: normal; }
  .group.two :global(.icon) { margin-left: 60px; }
  .box { margin: 1px 0 0; border: 2px solid #333; border-radius: 8px; overflow: hidden; }
  .box .group { height: 41px; padding: 0 14px 0 15px; color: #fff; }
  .box .nav-item { margin: 0; padding-left: 11px; }
  .box.management { margin-top: 7px; }

  .scrollbar { flex: none; width: 19px; display: flex; flex-direction: column; align-items: center; padding: 6px 0; background: #2c2c2c; }
  .arrow-up { border: 6px solid transparent; border-top: 0; border-bottom: 9px solid #9f9f9f; }
  .arrow-down { border: 6px solid transparent; border-bottom: 0; border-top: 9px solid #9f9f9f; }
  .thumb { flex: 1; width: 11px; margin: 34px 0 9px; border-radius: 6px; background: #9f9f9f; }

  /* Main area */
  main { flex: 1; min-width: 0; display: flex; flex-direction: column; padding: 18px 35px 20px; border-radius: 8px 0 0; background: #292929; box-shadow: 0 0 4px #000; }
  .title-row { flex: none; display: flex; align-items: center; height: 40px; padding-left: 3px; color: #d6d6d6; }
  h1 { margin: 0 8px; font-size: 28px; font-weight: 600; line-height: 40px; }
  .help { gap: 8px; width: 120px; height: 40px; margin-right: -5px; border: 1px solid #666; border-radius: 4px; color: #fff; font-weight: 600; }
  .actions { flex: none; display: flex; height: 46px; margin-top: 32px; padding: 2px 3px; border: 1px solid #666; border-radius: 4px; }
  .action { gap: 8px; height: 40px; padding: 0 16px; border: 0; border-radius: 4px; color: #d6d6d6; font-weight: 600; }
  .action.primary { background: #0078d4; color: #fff; width: 146px; }
  .action :global(.s14) { margin-left: -3px; }

  .card { flex: 1; min-height: 0; display: flex; margin-top: 16px; border: 1px solid #525252; border-radius: 8px; box-shadow: 0 2px 4px #0006; }
  h2 { font-size: 18px; font-weight: 600; line-height: 30px; }
  .setup { flex: 0 1 568px; min-width: 0; padding: 15px 15px 0; }
  .setup-head { display: flex; justify-content: space-between; padding: 0 12px; }
  .hide { gap: 5px; width: 83px; height: 30px; border: 1px solid #666; border-radius: 4px; font-size: 14px; }
  .field-head { display: flex; justify-content: space-between; margin: 19px 0 5px; }
  .field-head label { font-weight: 600; }
  .field-head a { color: #479ef5; }
  .required { color: #dc626d; }
  .select { display: grid; align-items: center; height: 40px; }
  .select select { grid-area: 1 / 1; width: 100%; height: 40px; padding: 0 12px 0 10px; border: 1px solid #666; border-radius: 3px; background: #141414; appearance: none; }
  .select.bright select { border-color: #d6d6d6; }
  .select > :global(.icon) { grid-area: 1 / 1; justify-self: end; margin-right: 7px; pointer-events: none; }
  .instructions-head { display: flex; align-items: center; gap: 7px; margin: 23px 0 7px; }
  .instructions-head :global(.icon) { color: #d6d6d6; }
  textarea { display: block; width: 100%; background: #292929; }
  .instructions { height: 161px; padding: 9px 15px; border: 1px solid #666; border-bottom-color: #adadad; border-radius: 4px; resize: vertical; overflow: hidden; }
  .prompt-buttons { display: flex; gap: 10px; margin-top: 12px; font-size: 14px; }
  .prompt-buttons button { height: 31px; gap: 6px; border: 1px solid #666; border-radius: 4px; }
  .prompt-buttons .apply { flex: 236; border-color: #424242; color: #5c5c5c; }
  .prompt-buttons .generate { flex: 252; }
  .prompt-buttons .undo { flex: none; width: 30px; }
  .add-section { width: 100%; height: 39px; gap: 7px; margin-top: 25px; border: 1px solid #666; font-weight: 600; }
  .fold { width: 100%; justify-content: flex-start; margin-top: 31px; font-weight: 600; }
  .fold.first { margin-top: 53px; }
  .fold :global(.icon) { margin: 0 10px 0 -3px; }
  .divider { flex: none; width: 1px; background: #484848; display: flex; align-items: center; }
  .grip { flex: none; width: 7px; height: 45px; margin-left: -3px; border: solid #484848; border-width: 0 2px; }

  .chat { flex: 1; min-width: 0; display: flex; flex-direction: column; padding: 14px 27px 0 15px; }
  .chat-head { flex: none; display: flex; align-items: center; height: 41px; }
  .chat-head h2 { align-self: flex-start; }
  .chat-head > button { margin-left: 15px; color: #d6d6d6; margin-top: -8px; }
  .pipe { height: 17px; margin: 0 36px 0 22px; border-left: 2px solid #d6d6d6; }
  .format { width: 175px; margin: 0 -3px 0 10px; }
  .chat-head > .format + button { margin: 0 -7px 0 13px; }
  .history { flex: 1; min-height: 0; display: flex; margin-top: 9px; }
  .messages { flex: 1; min-width: 0; display: flex; flex-direction: column; padding: 11px 23px 0 34px; overflow: hidden; white-space: normal; }
  .question { align-self: flex-end; padding: 15px 20px; border-radius: 10px; background: #082338; box-shadow: 0 2px 4px #0008; color: #ebebeb; }
  .answer { position: relative; flex: none; margin-top: 19px; padding: 33px 8px 60px; border-radius: 10px; box-shadow: 0 0 4px #0009; color: #d6d6d6; }
  .dots { position: absolute; right: 20px; top: 10px; color: #0f7fdc; }
  h3 { padding-right: 12px; font-size: 23px; font-weight: 600; line-height: 35px; color: #fff; }
  h4 { margin: 64px 0 17px; font-size: 20px; font-weight: 900; line-height: 30px; color: #fff; }
  ol { padding: 0 36px; }
  .inner { background: #2b2b2b; }
  .inner .thumb { flex: none; height: 71px; margin: 8px 0; }
  .query { flex: none; width: auto; height: 119px; margin: 16px 18px 0 30px; padding: 8px 10px; border: 2px solid #2899f5; resize: none; outline: 0; }
  .query::placeholder { color: #adadad; opacity: 1; }
  .query-foot { flex: none; display: flex; align-items: center; justify-content: flex-end; gap: 15px; height: 38px; margin: 0 28px 28px 0; font-size: 14px; color: #d6d6d6; }
  .attach { margin-left: -7px; color: #479ef5; }
  .muted { color: #5c5c5c; }
</style>
